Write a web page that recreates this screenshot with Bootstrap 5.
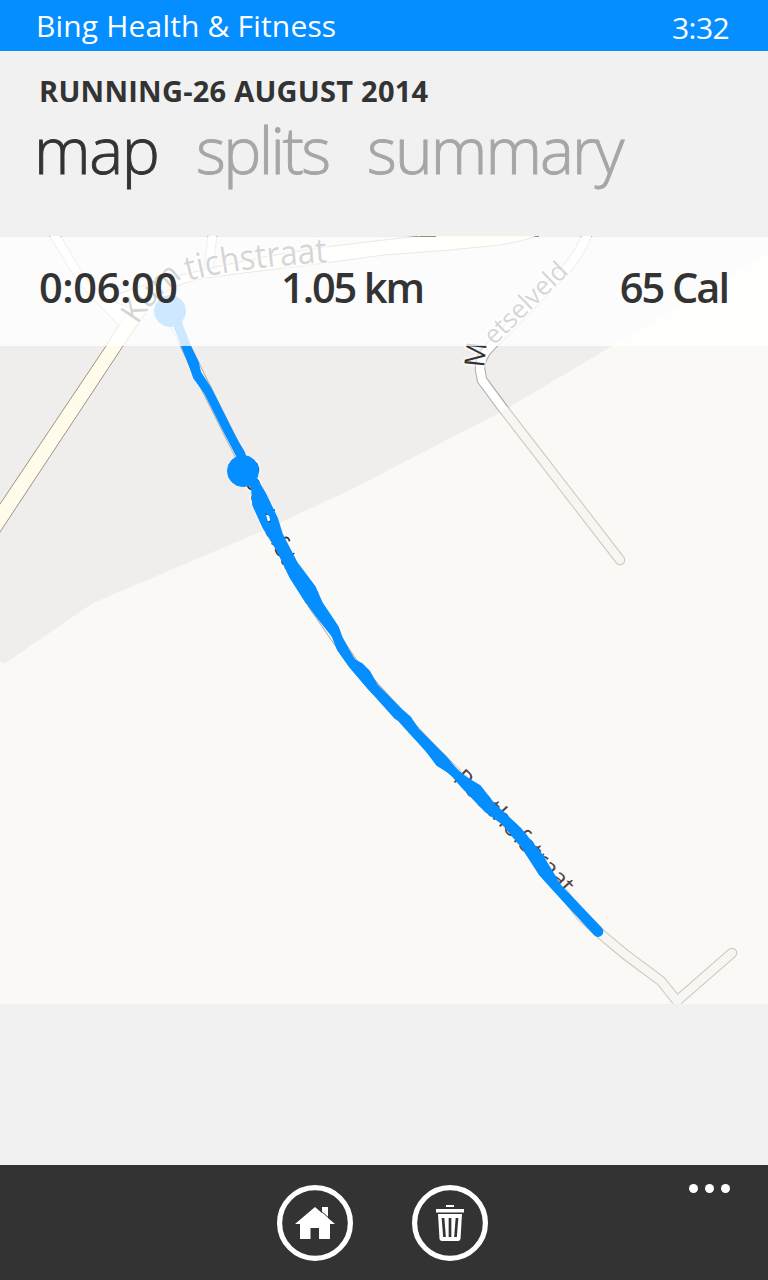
<!DOCTYPE html>
<html lang="en">
<head>
<meta charset="utf-8">
<meta name="viewport" content="width=device-width, initial-scale=1">
<title>Bing Health &amp; Fitness</title>
<link href="https://cdn.jsdelivr.net/npm/bootstrap@5.3.0/dist/css/bootstrap.min.css" rel="stylesheet">
<style>
body{background:#f1f1f1;color:#333;font-family:"Open Sans","Noto Sans",sans-serif;height:1280px;overflow:hidden}
.status{background:#058eff;height:51px;padding:0 39px 0 36px;font-size:30px;line-height:51px}
.app-name{letter-spacing:.17px}
.clock{padding-top:2px;letter-spacing:-.6px}
.page-head{height:185px;padding:20px 37px 0}
.run-title{font-size:29px;line-height:40px;font-weight:700;letter-spacing:.25px;margin:0 0 0 2px}
.pivot{font-size:64px;line-height:78px;font-weight:300;color:#a6a6a6;margin-left:-3px;-webkit-text-stroke:.9px currentColor}
.pivot a{color:inherit;text-decoration:none}
.pivot a.active{color:#333}
.t-map{letter-spacing:-1.3px;width:162px}
.t-splits{letter-spacing:-2.6px;width:171px}
.t-summary{letter-spacing:-1.9px}
.map-view{height:768px}
.stats{top:1px;height:109px;background:rgba(255,255,255,.8);padding:0 40px 8px 39px;font-size:41.5px;font-weight:600;white-space:nowrap}
.s-time{width:242px;letter-spacing:-.4px}
.s-dist{letter-spacing:-2.1px}
.s-cal{letter-spacing:-2px}
.app-bar{height:115px;background:#333;gap:59px;padding-right:3px}
.round{width:76px;height:76px;background:none;border:0;padding:0}
.more{right:38px;top:19px;gap:7px;background:none;border:0;padding:0}
.more i{width:9px;height:9px;border-radius:50%;background:#fff}
svg{display:block}
.edge{fill:none;stroke:#b0aaa7;stroke-width:10.5}
.fillr{fill:none;stroke:#fff;stroke-width:8.5}
.pale-e{stroke:#cec4c1}.pale-f{stroke:#f6f7f2}
.street{paint-order:stroke;stroke:#fff;stroke-opacity:.55;stroke-width:4;stroke-linejoin:round;font-family:"Open Sans",sans-serif}
</style>
</head>
<body class="d-flex flex-column">
<header class="status d-flex justify-content-between text-white flex-shrink-0"><span class="app-name">Bing Health &amp; Fitness</span><span class="clock">3:32</span></header>
<section class="page-head flex-shrink-0">
  <h1 class="run-title">RUNNING-26 AUGUST 2014</h1>
  <nav class="pivot d-flex"><a class="t-map active" href="#">map</a><a class="t-splits" href="#">splits</a><a class="t-summary" href="#">summary</a></nav>
</section>
<main class="map-view position-relative flex-shrink-0">
  <svg width="768" height="768" viewBox="0 236 768 768" role="img" aria-label="Run route">
    <defs>
      <path id="p0" d="M138 325Q152 299 190 273"/>
      <path id="p1" d="M188 281Q240 267 335 262"/>
      <path id="p2" d="M484 368L487 340"/>
      <path id="p3" d="M494 346L574 268"/>
      <path id="p4" d="M240 466L258 517L278 557L314 616"/>
      <path id="p5" d="M452 780L491 817L524 852L571 903"/>
    </defs>
    <rect y="236" width="768" height="768" fill="#faf9f6"/>
    <path d="M0 236H768V252L612 346L503 411L350 490L260 532L93 603L4 664L0 661Z" fill="#efeeed"/>
    <!-- streets -->
    <path d="M49 235L72 273Q84 291 119 325L130 308L107 299Q92 287 85 277L60 235Z M208 235L204 270L213 268L217 235Z" fill="#fff" stroke="#b0aaa7" stroke-width="1"/>
    <path class="edge" d="M589 230Q580 257 556 280L491 346Q480 356 480 369L482 380L505 411"/>
    <path class="edge pale-e" d="M505 411L620 560" stroke-linecap="round"/>
    <path class="fillr pale-f" d="M505 411L620 560" stroke-linecap="round"/>
    <path class="fillr" d="M589 230Q580 257 556 280L491 346Q480 356 480 369L482 380L504 410"/>
    <path d="M-2 507L106 346L119 325L130 308L123 293Q150 282 190 273Q260 256 325 247L384 240L430 235H541L500 246L450 250L384 255L325 263L220 276Q182 280 163 293Q155 298 123 346L-2 535Z" fill="#fffceb"/>
    <path d="M-2 507L106 346L119 325M116 295Q150 282 190 273Q260 256 325 247L384 240L430 235M541 235Q520 242 500 245L450 250L384 255L325 263L220 276Q182 280 163 293Q155 298 123 346L-2 535" fill="none" stroke="#9d9287" stroke-width="1"/>
    <path d="M420 236.5H436M535 236.5H539" stroke="#9d8b76"/>
    <path class="edge" d="M173 320L200 376L238 452L255 487L287 560L311 602L353 663L399 714L432 749"/>
    <path class="fillr" d="M173 320L200 376L238 452L255 487L287 560L311 602L353 663L399 714L432 749"/>
    <path class="edge pale-e" d="M432 749L504 820L524 844L564 894L582 917L602 935L626 955L661 981L677 1001L732 953" stroke-linecap="round"/>
    <path class="fillr pale-f" d="M432 749L504 820L524 844L564 894L582 917L602 935L626 955L661 981L677 1001L732 953M677 1000V1006" stroke-linecap="round"/>
    <!-- street names -->
    <g class="street" fill="#333">
      <text font-size="32" letter-spacing="-1.5"><textPath href="#p0">Kum</textPath></text>
      <text font-size="35" textLength="141" lengthAdjust="spacingAndGlyphs"><textPath href="#p1" textLength="141" lengthAdjust="spacingAndGlyphs">tichstraat</textPath></text>
      <text font-size="28"><textPath href="#p2">M</textPath></text>
      <text font-size="26" letter-spacing="-.3"><textPath href="#p3">etselveld</textPath></text>
      <text font-size="24"><textPath href="#p4">Poothofstraat</textPath></text>
    </g>
    <text class="street" fill="#5a4443" font-size="25"><textPath href="#p5">Poothofstraat</textPath></text>
    <!-- recorded track -->
    <g fill="#058eff" stroke="#058eff" stroke-linejoin="round">
      <path stroke-width="1.6" fill-rule="evenodd" d="M170 311L180 311L182 325L190 346L198 362L201 376L210 388L222 412L234 436L244 452L250 470L256 478L266 495L277 518L282 534L297 563L315 587L322 603L338 627L342 638L354 660L362 664L369 671L377 685L402 710L410 717L418 729L446 757L460 774L480 786L494 804L520 828L542 855L560 885L582 908L601 928A4.500 4.500 0 0 1 595 935L560 897L540 875L522 847L503 824L485 811L462 787L450 773L437 765L428 753L413 735L402 722L395 718L370 690L350 667L338 650L333 637L318 618L304 599L290 577L277 550L263 527L253 505L252 490L238 456L232 444L220 422L206 394L194 378L190 366L182 346L174 326ZM264 511L267 521L272 525L270 516Z"/>
      <path fill="none" stroke-width="9" d="M176 320L186 346L197 374L208 391L227 429L241 456M318 605L333 628L341 647L356 668L372 687L398 714L414 732L441 761L471 787L506 822L530 850L549 879L571 903L598 931"/>
      <circle cx="170" cy="311" r="15.500" stroke-width="1"/><circle cx="243" cy="471" r="15.500" stroke-width="1"/>
    </g>
  </svg>
  <div class="stats position-absolute start-0 w-100 d-flex align-items-center"><div class="s-time">0:06:00</div><div class="s-dist">1.05 km</div><div class="s-cal ms-auto">65 Cal</div></div>
</main>
<footer class="app-bar mt-auto d-flex justify-content-center align-items-center position-relative flex-shrink-0">
  <button class="round" aria-label="Home"><svg width="76" height="76" viewBox="0 0 76 76"><circle cx="38" cy="38" r="35.4" fill="none" stroke="#fff" stroke-width="5.2"/><path d="M18 39L38 22L45 28V22H51V33L58 39H53V54H42V43H33.500V54H23V39Z" fill="#fff"/><path d="M44 26L53 34" stroke="#333" stroke-width="1"/></svg></button>
  <button class="round" aria-label="Delete"><svg width="76" height="76" viewBox="0 0 76 76"><circle cx="38" cy="38" r="35.4" fill="none" stroke="#fff" stroke-width="5.200"/><path d="M34 20H42V22H34ZM24 24H52V27.500H24ZM26 29H50L48.500 54Q48 56 46 56H30Q28 56 27.500 54Z" fill="#fff"/><path d="M31 33L32.500 52M38 33V52M45 33L43.500 52" stroke="#333" stroke-width="2.700"/></svg></button>
  <button class="more position-absolute d-flex" aria-label="More"><i></i><i></i><i></i></button>
</footer>
<script src="https://cdn.jsdelivr.net/npm/bootstrap@5.3.0/dist/js/bootstrap.bundle.min.js"></script>
</body>
</html>
